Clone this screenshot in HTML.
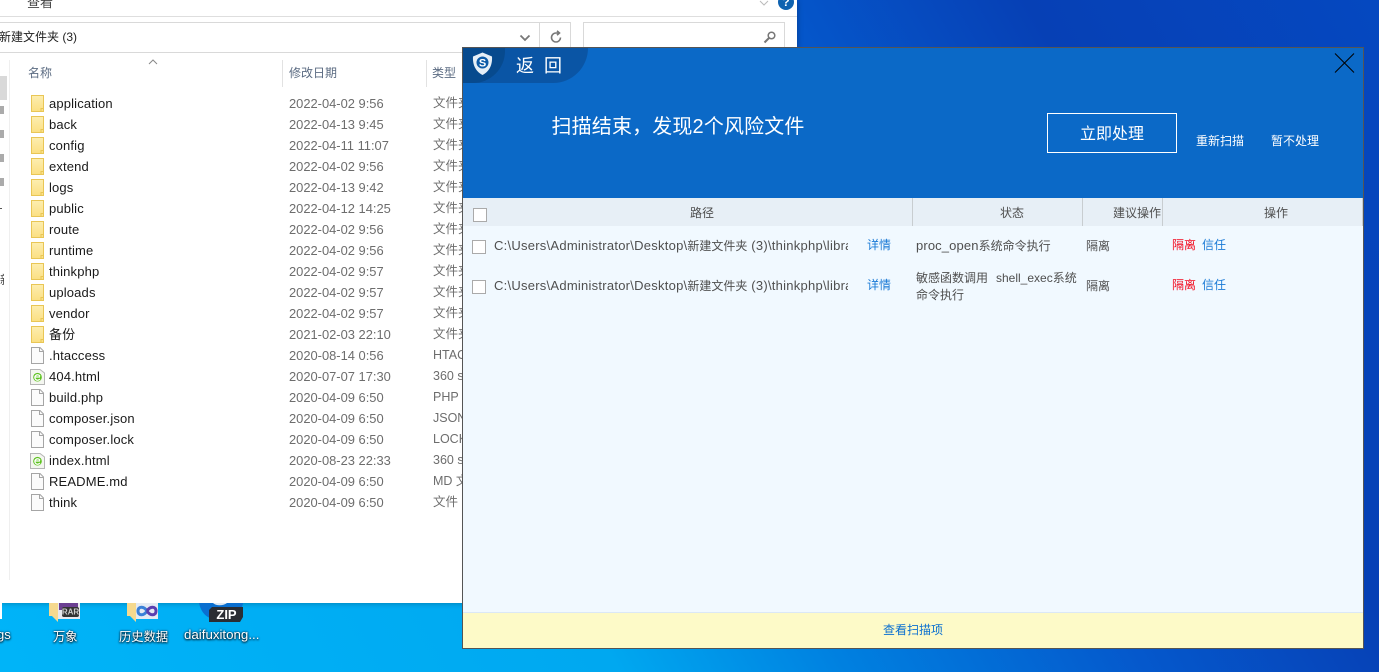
<!DOCTYPE html>
<html><head><meta charset="utf-8">
<style>
html,body{margin:0;padding:0;width:1379px;height:672px;overflow:hidden}
body{position:relative;font-family:"Liberation Sans","Noto Sans CJK SC",sans-serif;background:linear-gradient(60deg,#00b4f8 0%,#00a8f0 35%,#0080e0 48%,#0558cc 65%,#0640b5 80%,#0548c0 100%)}
.a{position:absolute;white-space:nowrap}
#ex{position:absolute;left:0;top:0;width:797px;height:603px;background:#fff;overflow:hidden;box-shadow:0 0 6px rgba(0,0,0,.3)}
.r{position:absolute;left:0;width:462px;height:21px;line-height:21px;font-size:13px}
.r b{position:absolute;left:49px;font-weight:normal;color:#1a1a1a;white-space:nowrap;letter-spacing:.15px}
.r i{position:absolute;left:289px;font-style:normal;color:#6d6d6d;font-size:12.9px;white-space:nowrap}
.r u{position:absolute;left:433px;text-decoration:none;color:#6d6d6d;font-size:12.5px;white-space:nowrap;width:29px;overflow:hidden}
.r svg{position:absolute;left:30px;top:0}
#m{position:absolute;left:462px;top:47px;width:900px;height:600px;border:1px solid #555;background:#f1f9ff;overflow:hidden}
.t{color:#4f4f4f;font-size:12px;line-height:16px}
.l{font-size:13px;letter-spacing:.25px}
.sep{position:absolute;top:150px;width:1px;height:28px;background:#c8cdd0}
.cb{position:absolute;width:12px;height:12px;background:#fff;border:1px solid #aaa}
.bl{color:#1a7ad6}
.dt{position:absolute;color:#fff;text-shadow:0 1px 2px #000,0 0 2px #024;font-size:12.3px;white-space:nowrap}
</style></head><body>

<svg width="0" height="0" style="position:absolute"><defs>
<linearGradient id="fg" x1="0" y1="0" x2="0" y2="1"><stop offset="0" stop-color="#fdeeb0"/><stop offset="1" stop-color="#fbdf82"/></linearGradient>
<symbol id="f" viewBox="0 0 15 21"><path d="M1.500 2.500H13.500V18.500H1.500Z" fill="url(#fg)" stroke="#e9c655"/><path d="M11 18V15.500H13.500" fill="none" stroke="#e9c655"/></symbol>
<symbol id="d" viewBox="0 0 15 21"><path d="M1.500 2.500H10L13.500 6V18.500H1.500Z" fill="#fbfbfb" stroke="#a5a5a5"/><path d="M9.500 2.500V6.500H13.500" fill="none" stroke="#a5a5a5"/></symbol>
<symbol id="h" viewBox="0 0 15 21"><path d="M.5 3.500H10L14.500 7V18.500H.5Z" fill="#f4f6f0" stroke="#b5b5b5"/><circle cx="7.500" cy="11.200" r="4.300" fill="#5cc21e"/><path d="M5 11H10M9.800 13A2.700 2.700 0 1 1 10 10.400" fill="none" stroke="#fff" stroke-width="1.300"/></symbol>
</defs></svg>

<div id="ex">
  <div class="a" style="left:27px;top:-5px;font-size:13px;line-height:16px;color:#444">查看</div>
  <svg class="a" style="left:759px;top:0" width="12" height="7"><path d="M1 1L5 5L9 1" fill="none" stroke="#bbb"/></svg>
  <div class="a" style="left:778px;top:-6px;width:16px;height:16px;border-radius:8px;background:#0f62b0;color:#fff;font-size:12px;font-weight:bold;text-align:center;line-height:16px">?</div>
  <div class="a" style="left:0;top:16px;width:797px;height:1px;background:#dedede"></div>
  <div class="a" style="left:0;top:22px;width:571px;height:31px;border:1px solid #d9d9d9;border-left:0;box-sizing:border-box"></div>
  <div class="a" style="left:539px;top:22px;width:1px;height:31px;background:#d9d9d9"></div>
  <div class="a" style="left:-1px;top:29px;font-size:12px;line-height:16px;color:#222">新建文件夹 (3)</div>
  <svg class="a" style="left:519px;top:34px" width="12" height="8"><path d="M1.500 1.500L6 6L10.500 1.500" fill="none" stroke="#777" stroke-width="1.800"/></svg>
  <svg class="a" style="left:549px;top:30px" width="14" height="15"><path d="M11.500 7.500A4.500 4.500 0 1 1 7 3H10M8 .8L10.500 3L8 5.200" fill="none" stroke="#777" stroke-width="1.600"/></svg>
  <div class="a" style="left:583px;top:22px;width:202px;height:31px;border:1px solid #d9d9d9;box-sizing:border-box"></div>
  <svg class="a" style="left:763px;top:30px" width="14" height="14"><circle cx="8.500" cy="5.500" r="3.300" fill="none" stroke="#777" stroke-width="1.500"/><path d="M6 8L1.500 12.500" stroke="#777" stroke-width="2"/></svg>

  <div class="a" style="left:0;top:76px;width:7px;height:24px;background:#d9d9d9"></div>
  <div class="a" style="left:0;top:106px;width:4px;height:8px;background:#888;opacity:.7"></div>
  <div class="a" style="left:0;top:130px;width:4px;height:8px;background:#888;opacity:.7"></div>
  <div class="a" style="left:0;top:154px;width:4px;height:8px;background:#888;opacity:.7"></div>
  <div class="a" style="left:0;top:178px;width:4px;height:8px;background:#888;opacity:.7"></div>
  <div class="a" style="left:0;top:208px;width:2px;height:1px;background:#555"></div>
  <div class="a" style="left:0;top:272px;font-size:12px;line-height:16px;color:#444;width:4px;overflow:hidden">新</div>
  <div class="a" style="left:9px;top:60px;width:1px;height:520px;background:#efefef"></div>

  <svg class="a" style="left:148px;top:59px" width="10" height="6"><path d="M1 5L5 1L9 5" fill="none" stroke="#888"/></svg>
  <div class="a" style="left:28px;top:65px;font-size:12px;line-height:16px;color:#5b6b82">名称</div>
  <div class="a" style="left:289px;top:65px;font-size:12px;line-height:16px;color:#5b6b82">修改日期</div>
  <div class="a" style="left:432px;top:65px;font-size:12px;line-height:16px;color:#5b6b82">类型</div>
  <div class="a" style="left:282px;top:60px;width:1px;height:27px;background:#e2e2e2"></div>
  <div class="a" style="left:426px;top:60px;width:1px;height:27px;background:#e2e2e2"></div>

  <div class="r" style="top:93px"><svg width="15" height="21"><use href="#f"/></svg><b>application</b><i>2022-04-02 9:56</i><u>文件夹</u></div>
  <div class="r" style="top:114px"><svg width="15" height="21"><use href="#f"/></svg><b>back</b><i>2022-04-13 9:45</i><u>文件夹</u></div>
  <div class="r" style="top:135px"><svg width="15" height="21"><use href="#f"/></svg><b>config</b><i>2022-04-11 11:07</i><u>文件夹</u></div>
  <div class="r" style="top:156px"><svg width="15" height="21"><use href="#f"/></svg><b>extend</b><i>2022-04-02 9:56</i><u>文件夹</u></div>
  <div class="r" style="top:177px"><svg width="15" height="21"><use href="#f"/></svg><b>logs</b><i>2022-04-13 9:42</i><u>文件夹</u></div>
  <div class="r" style="top:198px"><svg width="15" height="21"><use href="#f"/></svg><b>public</b><i>2022-04-12 14:25</i><u>文件夹</u></div>
  <div class="r" style="top:219px"><svg width="15" height="21"><use href="#f"/></svg><b>route</b><i>2022-04-02 9:56</i><u>文件夹</u></div>
  <div class="r" style="top:240px"><svg width="15" height="21"><use href="#f"/></svg><b>runtime</b><i>2022-04-02 9:56</i><u>文件夹</u></div>
  <div class="r" style="top:261px"><svg width="15" height="21"><use href="#f"/></svg><b>thinkphp</b><i>2022-04-02 9:57</i><u>文件夹</u></div>
  <div class="r" style="top:282px"><svg width="15" height="21"><use href="#f"/></svg><b>uploads</b><i>2022-04-02 9:57</i><u>文件夹</u></div>
  <div class="r" style="top:303px"><svg width="15" height="21"><use href="#f"/></svg><b>vendor</b><i>2022-04-02 9:57</i><u>文件夹</u></div>
  <div class="r" style="top:324px"><svg width="15" height="21"><use href="#f"/></svg><b>备份</b><i>2021-02-03 22:10</i><u>文件夹</u></div>
  <div class="r" style="top:345px"><svg width="15" height="21"><use href="#d"/></svg><b>.htaccess</b><i>2020-08-14 0:56</i><u>HTACCESS</u></div>
  <div class="r" style="top:366px"><svg width="15" height="21"><use href="#h"/></svg><b>404.html</b><i>2020-07-07 17:30</i><u>360 se</u></div>
  <div class="r" style="top:387px"><svg width="15" height="21"><use href="#d"/></svg><b>build.php</b><i>2020-04-09 6:50</i><u>PHP 文件</u></div>
  <div class="r" style="top:408px"><svg width="15" height="21"><use href="#d"/></svg><b>composer.json</b><i>2020-04-09 6:50</i><u>JSON 文件</u></div>
  <div class="r" style="top:429px"><svg width="15" height="21"><use href="#d"/></svg><b>composer.lock</b><i>2020-04-09 6:50</i><u>LOCK 文件</u></div>
  <div class="r" style="top:450px"><svg width="15" height="21"><use href="#h"/></svg><b>index.html</b><i>2020-08-23 22:33</i><u>360 se</u></div>
  <div class="r" style="top:471px"><svg width="15" height="21"><use href="#d"/></svg><b>README.md</b><i>2020-04-09 6:50</i><u>MD 文件</u></div>
  <div class="r" style="top:492px"><svg width="15" height="21"><use href="#d"/></svg><b>think</b><i>2020-04-09 6:50</i><u>文件</u></div>
</div>

<!-- desktop icons -->
<div class="a" style="left:0;top:603px;width:2px;height:16px;background:#fff"></div>
<svg class="a" style="left:49px;top:603px" width="32" height="20"><path d="M0 0H9V19L3 13H0Z" fill="#f5d98e"/><rect x="9" y="0" width="22" height="16" fill="#e8e8ee"/><rect x="10" y="0" width="19" height="7" fill="#6b3f92"/><rect x="13" y="4" width="17" height="10" rx="2" fill="#333"/><text x="21.500" y="11.500" font-family="Liberation Sans" font-size="8" font-weight="bold" fill="#ccc" text-anchor="middle">RAR</text></svg>
<svg class="a" style="left:127px;top:603px" width="32" height="20"><path d="M0 0H9V19L3 13H0Z" fill="#f5d98e"/><rect x="9" y="0" width="22" height="16" fill="#e4eaf2"/><path d="M20 8C17 3 11 3 11 8S17 13 20 8" fill="none" stroke="#3a80d8" stroke-width="3"/><path d="M20 8C23 3 29 3 29 8S23 13 20 8" fill="none" stroke="#5a3fb0" stroke-width="3"/></svg>
<svg class="a" style="left:198px;top:603px" width="46" height="20"><path d="M1 0H45C44 8 38 14 30 16H16C8 15 3 9 1 0Z" fill="#0a6fd0"/><path d="M15 0C18 3 25 3 29 0Z" fill="#dfe9f3"/><path d="M14 4H45V14L42 19H11V7Z" fill="#2a2d33"/><text x="28.500" y="16" font-family="Liberation Sans" font-size="13" font-weight="bold" fill="#fff" text-anchor="middle">ZIP</text></svg>
<div class="dt" style="left:-3px;top:627px;font-size:13px">gs</div>
<div class="dt" style="left:53px;top:627px">万象</div>
<div class="dt" style="left:119px;top:627px">历史数据</div>
<div class="dt" style="left:184px;top:627px;font-size:13.300px">daifuxitong...</div>

<!-- modal -->
<div id="m">
  <div class="a" style="left:0;top:0;width:900px;height:150px;background:#0b69c7"></div>
  <div class="a" style="left:0;top:0;width:125px;height:35px;background:#0a55a5;border-radius:0 0 36px 0"></div>
  <div class="a" style="left:0;top:0;width:42px;height:35px;background:#074a8e;border-radius:0 0 32px 0"></div>
  <svg class="a" style="left:9px;top:4px" width="22" height="24"><path d="M10.500 .5L20 4.500C20.500 12 18 19 10.500 23C3 19 .5 12 1 4.500Z" fill="#e6eff7"/><circle cx="10.500" cy="10.500" r="6" fill="#0d5ba8"/><text x="10.500" y="14.500" font-family="Liberation Sans" font-size="11" font-weight="bold" fill="#fff" text-anchor="middle">S</text></svg>
  <div class="a" style="left:53px;top:8px;font-size:18px;line-height:20px;color:#fff;letter-spacing:10px">返回</div>
  <svg class="a" style="left:871px;top:5px" width="22" height="22"><path d="M1 .5L20 19.500M20 .5L1 19.500" stroke="#000" stroke-width="1"/></svg>
  <div class="a" style="left:88.500px;top:68px;font-size:20px;line-height:22px;color:#fff;font-weight:normal;letter-spacing:.15px">扫描结束，发现2个风险文件</div>
  <div class="a" style="left:584px;top:65px;width:130px;height:40px;box-sizing:border-box;border:1px solid #fff;color:#fff;font-size:16px;line-height:41px;text-align:center">立即处理</div>
  <div class="a" style="left:733px;top:85px;font-size:12px;line-height:16px;color:#fff">重新扫描</div>
  <div class="a" style="left:808px;top:85px;font-size:12px;line-height:16px;color:#fff">暂不处理</div>

  <div class="a" style="left:0;top:150px;width:900px;height:28px;background:#e7eff6"></div>
  <div class="sep" style="left:449px"></div>
  <div class="sep" style="left:619px"></div>
  <div class="sep" style="left:699px"></div>
  <div class="sep" style="left:899px"></div>
  <div class="cb" style="left:10px;top:160px"></div>
  <div class="a t" style="left:227px;top:157px">路径</div>
  <div class="a t" style="left:537px;top:157px">状态</div>
  <div class="a t" style="left:650px;top:157px">建议操作</div>
  <div class="a t" style="left:801px;top:157px">操作</div>

  <div class="cb" style="left:9px;top:192px"></div>
  <div class="a t" style="left:31px;top:190px;width:354px;overflow:hidden"><span class="l">C:\Users\Administrator\Desktop\</span>新建文件夹<span class="l"> (3)\thinkphp\library\think</span></div>
  <div class="a t bl" style="left:404px;top:189px">详情</div>
  <div class="a t" style="left:453px;top:190px"><span class="l" style="letter-spacing:.13px">proc_open</span>系统命令执行</div>
  <div class="a t" style="left:623px;top:190px">隔离</div>
  <div class="a t" style="left:709px;top:189px;color:#f30a1e">隔离</div>
  <div class="a t bl" style="left:739px;top:189px">信任</div>

  <div class="cb" style="left:9px;top:232px"></div>
  <div class="a t" style="left:31px;top:230px;width:354px;overflow:hidden"><span class="l">C:\Users\Administrator\Desktop\</span>新建文件夹<span class="l"> (3)\thinkphp\library\think</span></div>
  <div class="a t bl" style="left:404px;top:229px">详情</div>
  <div class="a t" style="left:453px;top:222px">敏感函数调用<span class="a" style="left:80px;top:0">shell_exec系统</span></div>
  <div class="a t" style="left:453px;top:239px">命令执行</div>
  <div class="a t" style="left:623px;top:230px">隔离</div>
  <div class="a t" style="left:709px;top:229px;color:#f30a1e">隔离</div>
  <div class="a t bl" style="left:739px;top:229px">信任</div>

  <div class="a" style="left:0;top:564px;width:900px;height:36px;box-sizing:border-box;border-top:1px solid #dbe8f6;background:#fdfac8;color:#0a6fd0;font-size:12px;line-height:34px;text-align:center">查看扫描项</div>
</div>
</body></html>
